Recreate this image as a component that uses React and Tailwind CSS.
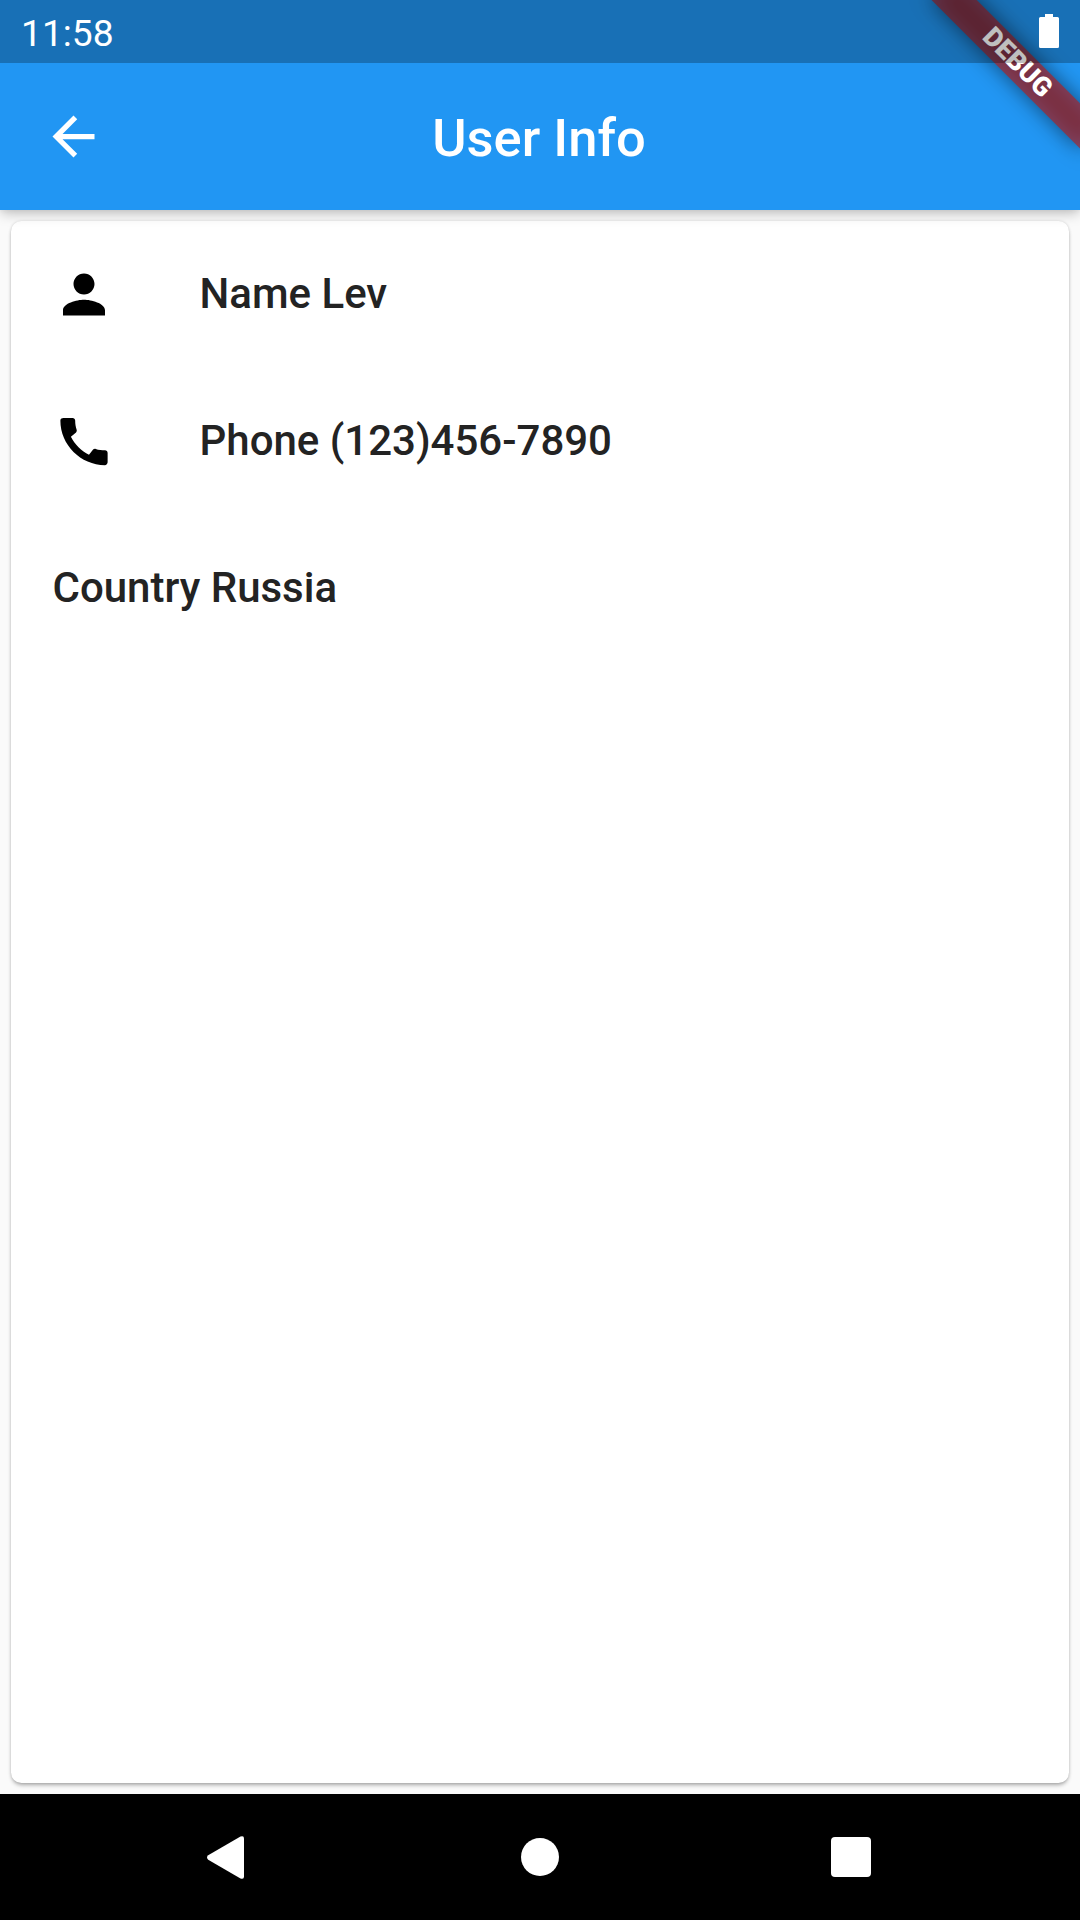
function ArrowBack() {
  return (
    <svg viewBox="0 0 24 24" className="h-[63px] w-[63px] fill-white">
      <path d="M20 11H7.83l5.59-5.59L12 4l-8 8 8 8 1.41-1.41L7.83 13H20v-2z" />
    </svg>
  );
}

function Person() {
  return (
    <svg viewBox="-0.19 0 24 24" className="h-[63px] w-[63px] fill-black">
      <path d="M12 12c2.21 0 4-1.79 4-4s-1.79-4-4-4-4 1.79-4 4 1.79 4 4 4zm0 2c-2.67 0-8 1.34-8 4v2h16v-2c0-2.66-5.33-4-8-4z" />
    </svg>
  );
}

function Phone() {
  return (
    <svg viewBox="-0.19 0 24 24" className="h-[63px] w-[63px] fill-black">
      <path d="M20.01 15.38c-1.23 0-2.42-.2-3.53-.56-.35-.12-.74-.03-1.01.24l-1.57 1.97c-2.83-1.35-5.48-3.9-6.89-6.83l1.95-1.66c.27-.28.35-.67.24-1.02-.37-1.11-.56-2.3-.56-3.53 0-.54-.45-.99-.99-.99H4.19C3.65 3 3 3.24 3 3.99 3 13.28 10.73 21 20.01 21c.71 0 .99-.63.99-1.18v-3.45c0-.54-.45-.99-.99-.99z" />
    </svg>
  );
}

function Battery() {
  return (
    <svg viewBox="0 0 20 34" className="mb-px h-[34px] w-[20px] fill-white">
      <path d="M6 0h8v3h4.500A1.500 1.500 0 0 1 20 4.500V32.500a1.500 1.500 0 0 1-1.500 1.500h-17A1.500 1.500 0 0 1 0 32.500V4.500A1.500 1.500 0 0 1 1.500 3H6z" />
    </svg>
  );
}

function DebugBanner() {
  return (
    <div className="pointer-events-none absolute top-[73px] left-[975px] h-[31.5px] w-[210px] origin-[105px_-73px] rotate-45">
      <div className="absolute inset-0 bg-black/50 blur-[10.4px]" />
      <div className="absolute inset-0 flex items-center justify-center bg-[#b71c1c]/63 text-[26.775px] leading-none font-black text-white">
        DEBUG
      </div>
    </div>
  );
}

function ListTile({ icon, children }) {
  return (
    <div className="flex h-[147px] items-center px-[41px]">
      {icon && <div className="w-[147px] shrink-0">{icon}</div>}
      <div className="pl-[0.5px] text-[42px] leading-none font-medium whitespace-nowrap text-[#232323]">{children}</div>
    </div>
  );
}

export default function App() {
  return (
    <div className="relative flex h-[1920px] w-[1080px] flex-col overflow-hidden bg-[#fafafa] font-['Roboto',sans-serif] antialiased">
      <header className="relative z-10 h-[210px] shrink-0 bg-[#2196f3] pt-[63px] shadow-[0_4px_12px_-1px_rgba(0,0,0,0.26),0_0_6px_rgba(0,0,0,0.04)]">
        <div className="grid h-[147px] grid-cols-[147px_1fr_147px] items-center">
          <div className="flex justify-center">
            <ArrowBack />
          </div>
          <h1 className="pt-[3px] pr-[2px] text-center text-[52.5px] leading-none font-medium whitespace-nowrap text-white">
            User Info
          </h1>
        </div>
      </header>

      <main className="flex-1 pt-[10.5px] pr-[11px] pb-[11px] pl-[11px]">
        <section className="h-full rounded-[10.5px] bg-white shadow-[0_3px_4px_-1px_rgba(0,0,0,0.32),0_0_3px_rgba(0,0,0,0.14)]">
          <ListTile icon={<Person />}>Name Lev</ListTile>
          <ListTile icon={<Phone />}>Phone (123)456-7890</ListTile>
          <ListTile>Country Russia</ListTile>
        </section>
      </main>

      <nav className="flex h-[126px] shrink-0 items-center justify-between bg-black pr-[209px] pl-[207px]">
        <svg viewBox="0 0 37 43" className="h-[43px] w-[37px] fill-white">
          <path d="M1.200 19.300 33.500.6Q37-.8 37 2.500v38q0 3.300-3.500 1.900L1.200 23.700Q-1.200 21.500 1.200 19.300z" />
        </svg>
        <div className="ml-[5px] size-[38.5px] rounded-full bg-white" />
        <div className="size-[40px] rounded-[4px] bg-white" />
      </nav>

      <div className="absolute inset-0 z-20 overflow-hidden">
        <DebugBanner />
        <div className="relative flex h-[63px] items-center justify-between bg-black/25 pr-[21px] pl-[21px]">
          <span className="pt-[5px] text-[37.2px] leading-none text-white">11:58</span>
          <Battery />
        </div>
      </div>
    </div>
  );
}
